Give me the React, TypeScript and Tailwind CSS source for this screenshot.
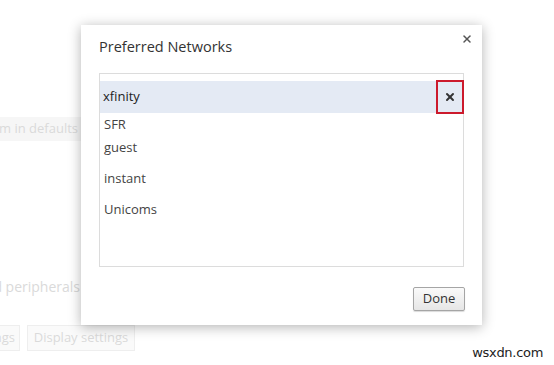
import { X } from 'lucide-react';

const NETWORKS = [
    { name: 'SFR', h: 'h-[24px]' },
    { name: 'guest', h: 'h-[22px] mb-[4px]' },
    { name: 'instant', h: 'h-[31px]' },
    { name: 'Unicoms', h: 'h-[31px]' },
];

export default function App() {
    return (
        <div className="relative w-[554px] h-[365px] overflow-hidden bg-white font-['Open_Sans',sans-serif]">
            {/* faded settings page behind the dialog */}
            <div className="flex flex-col pt-[117px] text-[13px] text-[#dadada]">
                <div className="w-[82px] h-[24px] overflow-hidden flex justify-end items-center bg-[#f6f6f6] whitespace-nowrap pr-1">
                    system in defaults
                </div>
                <div className="mt-[135px] w-[80px] overflow-hidden flex justify-end whitespace-nowrap text-[14px]">
                    Devices and peripherals
                </div>
                <div className="mt-[28px] flex gap-[7px]">
                    <div className="w-[20px] h-[26px] overflow-hidden flex justify-end items-center border border-l-0 border-[#eeeeee] bg-[#fafafa] whitespace-nowrap pr-1">
                        settings
                    </div>
                    <div className="w-[108px] h-[26px] flex justify-center items-center border border-[#eeeeee] bg-[#fafafa] whitespace-nowrap">
                        Display settings
                    </div>
                </div>
            </div>

            {/* dialog */}
            <div className="absolute left-[81px] top-[25px] w-[401px] h-[300px] bg-white shadow-[0_2px_12px_rgba(0,0,0,0.3)] flex flex-col">
                <div className="flex items-start justify-between pl-[18px] pr-[9px] pt-[10px] h-[48px]">
                    <h2 className="text-[14.5px] text-[#333] mt-[1px]">Preferred Networks</h2>
                    <X className="h-[12px] w-[12px] text-[#555] -mt-[2px]" strokeWidth={3} />
                </div>

                <div className="mx-[18px] h-[194px] border border-[#dcdcdc] pt-[7px] flex flex-col">
                    <div className="h-[32px] bg-[#e4eaf4] flex items-center justify-between pl-[3px]">
                        <span className="text-[13px] text-[#222]">xfinity</span>
                        <div className="w-[28px] h-[34px] -mr-[1px] border-[2px] border-[#cc1a2c] flex items-center justify-center">
                            <X className="h-[12px] w-[12px] text-[#333]" strokeWidth={4} />
                        </div>
                    </div>
                    {NETWORKS.map(n => (
                        <div key={n.name} className={`${n.h} flex items-center pl-[4px] text-[13px] text-[#444]`}>
                            {n.name}
                        </div>
                    ))}
                </div>

                <div className="flex justify-end pr-[17px] mt-[20px]">
                    <button className="w-[52px] h-[24px] border border-[#a5a5a5] rounded-[2px] bg-gradient-to-b from-[#fafafa] to-[#e6e6e6] text-[13px] text-[#333] shadow-[0_1px_1px_rgba(0,0,0,0.15)]">
                        Done
                    </button>
                </div>
            </div>

            <div className="absolute right-[11px] bottom-[3px] text-[13px] text-[#222] font-['DejaVu_Sans',sans-serif] tracking-[-0.3px]">
                wsxdn.com
            </div>
        </div>
    );
}
